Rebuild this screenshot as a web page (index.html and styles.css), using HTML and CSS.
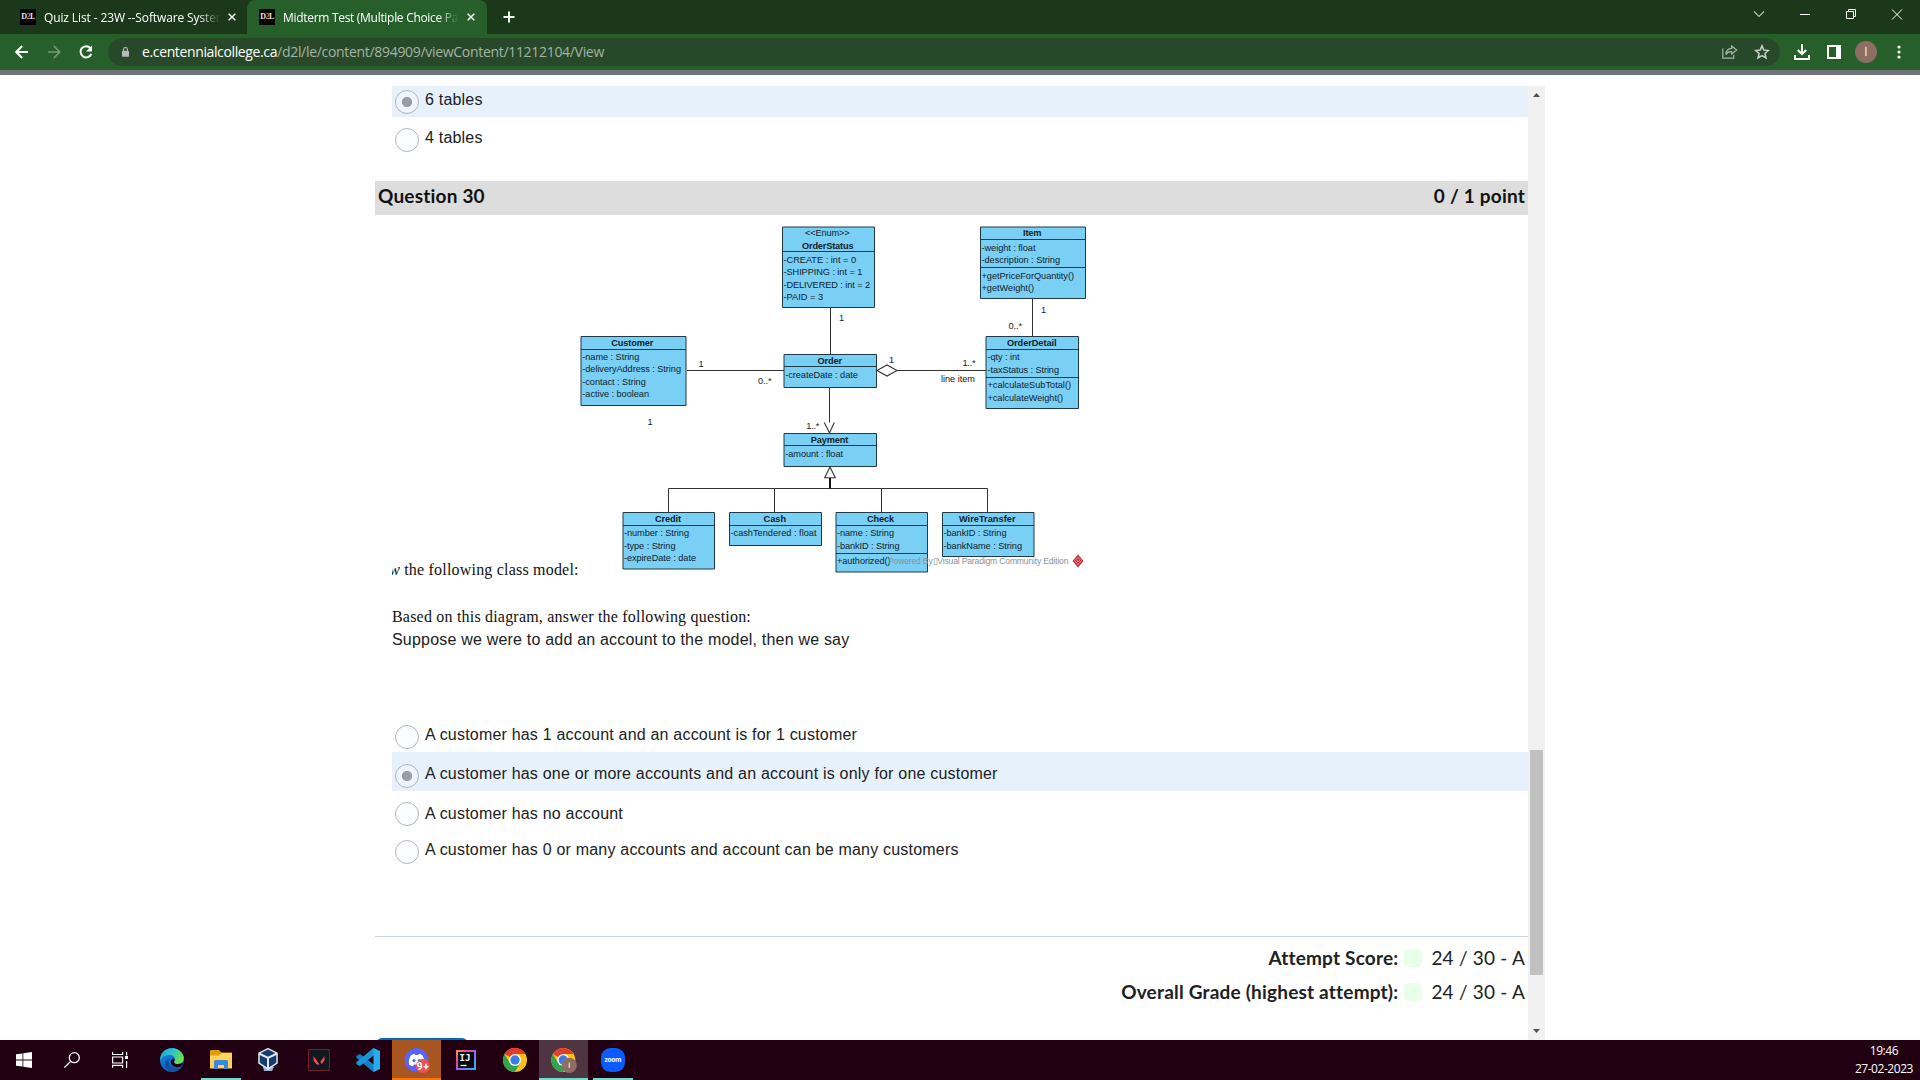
FILE: index.html
```html
<!DOCTYPE html>
<html lang="en">
<head>
<meta charset="utf-8">
<title>Midterm Test (Multiple Choice Part)</title>
<link rel="stylesheet" href="styles.css">
</head>
<body>
<header class="tabstrip">
  <div class="tab">
    <span class="favicon">D<i>2</i>L</span>
    <span class="tab-title">Quiz List - 23W --Software Systems</span>
    <svg class="tab-close" viewBox="0 0 8 8"><path d="M.7.7l6.6 6.6M7.3.7L.7 7.3"/></svg>
  </div>
  <div class="tab active">
    <span class="favicon">D<i>2</i>L</span>
    <span class="tab-title">Midterm Test (Multiple Choice Part</span>
    <svg class="tab-close" viewBox="0 0 8 8"><path d="M.7.7l6.6 6.6M7.3.7L.7 7.3"/></svg>
  </div>
  <svg class="new-tab" viewBox="0 0 12 12"><path d="M6 .5v11M.5 6h11"/></svg>
  <div class="window-controls">
    <svg viewBox="0 0 46 34"><path class="dim" d="M18 11.5l5 5 5-5"/></svg>
    <svg viewBox="0 0 46 34"><path d="M18 14.5h10"/></svg>
    <svg viewBox="0 0 46 34"><path d="M18.5 11.5h7v7h-7zM20.500 11.500v-2h7v7h-2"/></svg>
    <svg viewBox="0 0 46 34"><path d="M18 9.500l10 10M28 9.500l-10 10"/></svg>
  </div>
</header>
<nav class="toolbar">
  <svg class="nav-icon" viewBox="0 0 16 16"><path d="M14 8H3M8.200 2L2.200 8l6 6"/></svg>
  <svg class="nav-icon faded" viewBox="0 0 16 16"><path d="M2 8h11M7.800 2l6 6-6 6"/></svg>
  <svg class="nav-icon" viewBox="0 0 16 16"><path d="M13.300 10a5.600 5.600 0 1 1-1-6"/><path class="solid" d="M14 1.500v6H8z"/></svg>
  <div class="omnibox">
    <svg class="lock" viewBox="0 0 8 12"><rect x="0" y="4.500" width="8" height="7" rx=".8"/><path d="M1.800 5V3a2.200 2.200 0 0 1 4.400 0v2"/></svg>
    <span class="url"><b>e.centennialcollege.ca</b>/d2l/le/content/894909/viewContent/11212104/View</span>
    <svg class="share" viewBox="0 0 16 16"><path d="M.8 4.500v9.700h11v-3.400M9.700 2l5 4-5 4V7.700C6.800 7.500 5 8.500 3.800 10.600 4 6.800 6.200 4.700 9.700 4.400z"/></svg>
    <svg class="star" viewBox="0 0 16 16"><path d="M8 1.800l1.800 4.300 4.600.4-3.500 3 1.100 4.500L8 11.600 4 14l1.100-4.500-3.500-3 4.600-.4z"/></svg>
  </div>
  <svg class="download" viewBox="0 0 16 16"><path d="M8 0v10M3.800 6L8 10.200 12.200 6M1 11v4h14v-4"/></svg>
  <svg class="panel" viewBox="0 0 14 14"><path d="M0 0h14v14H0zM2 2v10h7V2z" fill-rule="evenodd"/></svg>
  <span class="avatar">I</span>
  <svg class="more" viewBox="0 0 4 14"><circle cx="2" cy="2" r="1.600"/><circle cx="2" cy="7" r="1.600"/><circle cx="2" cy="12" r="1.600"/></svg>
</nav>
<main class="page">
  <section class="quiz">
    <div class="option selected first"><span class="radio"></span><span class="label">6 tables</span></div>
    <div class="option second"><span class="radio"></span><span class="label">4 tables</span></div>
    <h2 class="question-bar"><span>Question 30</span><span>0 / 1 point</span></h2>
    <div class="figure">
      <p class="serif"><span class="clip"><i>w</i></span> the following class model:</p>
      <svg class="diagram" viewBox="578 222 530 352" width="530" height="352">
        <g class="box">
          <path d="M782.500 227h92v80.500h-92zM782.500 251.500h92"/>
          <path d="M581 336.500h105v69h-105zM581 349.500h105"/>
          <path d="M784 354.500h92.500v33h-92.500zM784 366.500h92.500"/>
          <path d="M980.500 227h105v71.500h-105zM980.500 239.500h105M980.500 267.500h105"/>
          <path d="M986 336.500h92.500v72h-92.500zM986 349.500h92.500M986 377.500h92.500"/>
          <path d="M784 433.500h92.500v33h-92.500zM784 445.500h92.500"/>
          <path d="M623 512.500h91.500v56.500h-91.500zM623 525.500h91.500"/>
          <path d="M729.500 512.500h92v33h-92zM729.500 525.500h92"/>
          <path d="M836 512.500h91.500v59.500h-91.500zM836 525.500h91.500M836 553.500h91.500"/>
          <path d="M942.500 512.500h91.500v44h-91.500zM942.500 525.500h91.500"/>
        </g>
        <g class="line">
          <path d="M830.500 308v46M687 370.500h97M897 370.500h89M1032.500 299v37M829.500 388v45M668.500 512v-23.500h319V512M774.500 489v23M881.500 489v23"/>
          <path class="slant" d="M824.300 422.500l5.200 10.500 4.800-10.500M877 370.500l10-5.500 10 5.500-10 5.500zM830 467l5.300 10.800h-10.600z"/>
          <path class="thick" d="M830 478v10.500"/>
        </g>
        <g class="title">
          <text x="802" y="248.500" textLength="51.500">OrderStatus</text>
          <text x="611.300" y="346" textLength="42">Customer</text>
          <text x="817.500" y="363.500" textLength="24.500">Order</text>
          <text x="1023" y="236.300" textLength="18.500">Item</text>
          <text x="1007" y="346" textLength="49.500">OrderDetail</text>
          <text x="810.700" y="442.500" textLength="37.500">Payment</text>
          <text x="655" y="522" textLength="26">Credit</text>
          <text x="763.500" y="522" textLength="22.500">Cash</text>
          <text x="867" y="522" textLength="27">Check</text>
          <text x="959" y="522" textLength="56.500">WireTransfer</text>
        </g>
        <g class="member">
          <text x="805" y="236.300" textLength="44.500">&lt;&lt;Enum&gt;&gt;</text>
          <text x="783.500" y="262.700" textLength="72.500">-CREATE : int = 0</text>
          <text x="783.500" y="275.200" textLength="78.800">-SHIPPING : int = 1</text>
          <text x="783.500" y="287.700" textLength="86.500">-DELIVERED : int = 2</text>
          <text x="783.500" y="300" textLength="39.500">-PAID = 3</text>
          <text x="582.300" y="360" textLength="57">-name : String</text>
          <text x="582.300" y="372.400" textLength="98.700">-deliveryAddress : String</text>
          <text x="582.300" y="384.800" textLength="63.500">-contact : String</text>
          <text x="582.300" y="397.200" textLength="66.700">-active : boolean</text>
          <text x="785.300" y="377.700" textLength="72.500">-createDate : date</text>
          <text x="785.300" y="456.700" textLength="57.700">-amount : float</text>
          <text x="981.500" y="250.700" textLength="54">-weight : float</text>
          <text x="981.500" y="263" textLength="78.500">-description : String</text>
          <text x="981.500" y="278.700" textLength="92.500">+getPriceForQuantity()</text>
          <text x="981.500" y="291" textLength="52.500">+getWeight()</text>
          <text x="987.500" y="360" textLength="32">-qty : int</text>
          <text x="987.500" y="372.600" textLength="71.500">-taxStatus : String</text>
          <text x="987.500" y="388.200" textLength="83.500">+calculateSubTotal()</text>
          <text x="987.500" y="400.800" textLength="75.500">+calculateWeight()</text>
          <text x="624" y="536.200" textLength="65">-number : String</text>
          <text x="624" y="548.600" textLength="51.500">-type : String</text>
          <text x="624" y="561" textLength="72">-expireDate : date</text>
          <text x="730.500" y="536.200" textLength="86">-cashTendered : float</text>
          <text x="837" y="536.200" textLength="57">-name : String</text>
          <text x="837" y="548.600" textLength="62.500">-bankID : String</text>
          <text x="837" y="564.300" textLength="53.500">+authorized()</text>
          <text x="943.500" y="536.200" textLength="63">-bankID : String</text>
          <text x="943.500" y="548.600" textLength="78.500">-bankName : String</text>
          <text x="839" y="320.500">1</text>
          <text x="698.500" y="367.300">1</text>
          <text x="647.500" y="424.500">1</text>
          <text x="889" y="362.700">1</text>
          <text x="1041" y="313.300">1</text>
          <text x="758" y="384" textLength="13.500">0..*</text>
          <text x="1008.500" y="329" textLength="13.500">0..*</text>
          <text x="962.500" y="366" textLength="13">1..*</text>
          <text x="941" y="382" textLength="34">line item</text>
          <text x="806.300" y="428.700" textLength="13">1..*</text>
        </g>
        <text class="watermark" x="888" y="564.300" textLength="180.500">Powered By▯Visual Paradigm Community Edition</text>
        <path d="M1078 554.500l5.500 6.500-5.500 6.500-5.500-6.500z" fill="#c8323a"/>
        <path d="M1076 559.500l2-2 2.200 2.200-2.200 2.300zM1074.500 560.500l3.500 4 3.500-4" fill="none" stroke="#efb0b0" stroke-width=".8"/>
      </svg>
    </div>
    <p class="serif prompt">Based on this diagram, answer the following question:</p>
    <p class="suppose">Suppose we were to add an account to the model, then we say</p>
    <div class="answers">
      <div class="option"><span class="radio"></span><span class="label">A customer has 1 account and an account is for 1 customer</span></div>
      <div class="option selected"><span class="radio"></span><span class="label">A customer has one or more accounts and an account is only for one customer</span></div>
      <div class="option third"><span class="radio"></span><span class="label">A customer has no account</span></div>
      <div class="option fourth"><span class="radio"></span><span class="label">A customer has 0 or many accounts and account can be many customers</span></div>
    </div>
    <div class="scores">
      <p><b>Attempt Score:</b><span class="swatch"></span><span>24 / 30 - A</span></p>
      <p><b>Overall Grade (highest attempt):</b><span class="swatch"></span><span>24 / 30 - A</span></p>
    </div>
    <div class="button-peek"></div>
  </section>
  <div class="scrollbar">
    <svg viewBox="0 0 7 4"><path d="M0 4h7L3.500 0z"/></svg>
    <div class="thumb"></div>
    <svg viewBox="0 0 7 4"><path d="M0 0h7L3.500 4z"/></svg>
  </div>
</main>
<footer class="taskbar">
  <div class="sys"><svg width="16" height="16" viewBox="0 0 16 16"><path fill="#fff" d="M0 2.300L6.500 1.400v6.200H0zM7.300 1.300L16 0v7.600H7.300zM0 8.400h6.500v6.200L0 13.700zM7.300 8.400H16V16l-8.700-1.200z"/></svg></div>
  <div class="sys"><svg width="16" height="16" viewBox="0 0 16 16" fill="none" stroke="#fff" stroke-width="1.300"><circle cx="10.300" cy="5.700" r="5"/><path d="M6.600 9.400L.4 15.600"/></svg></div>
  <div class="sys"><svg width="16" height="16" viewBox="0 0 16 16" fill="none" stroke="#fff" stroke-width="1.200"><path d="M.6 0v2.500h10V0M.6 5h10v6H.6zM.6 15.800v-2.500h10v2.500M14.600 0v3.500M14.600 9v7"/><path d="M13 4h3v3h-3z" fill="#fff" stroke="none"/></svg></div>
  <div class="app apps-start"><svg width="24" height="24" viewBox="0 0 24 24"><defs><linearGradient id="ea" x1="0" y1="0" x2="1" y2=".4"><stop offset="0" stop-color="#1fa5df"/><stop offset=".55" stop-color="#2fc3c8"/><stop offset="1" stop-color="#6be04a"/></linearGradient><linearGradient id="eb" x1="0" y1="0" x2=".5" y2="1"><stop offset="0" stop-color="#1a8fdc"/><stop offset="1" stop-color="#0b5cc0"/></linearGradient></defs><circle cx="12" cy="12" r="12" fill="url(#eb)"/><path d="M.5 9C2-1 19-4 23.500 8c1.200 4.500-1.500 8-6 8-3 0-4-1.200-3-3 1-2.500 0-6-5-6C5 7 1.500 9 .2 13z" fill="url(#ea)"/><path d="M9.500 10.500c-2 4 0 9 5 10 3 .5 6-.5 8-2.500C17 26 6 25 5 17c-.3-3 1.500-6 4.500-6.500z" fill="#124f9f"/><path d="M14.300 10.500c1 2-.7 2.800-.2 4 .6 2 5.500 2.400 9 0-.2 1.500-.8 2.800-1.500 3.800-4 1.500-8 1.200-10.200-2-1.500-2.500-.6-5.200 2.900-5.800z" fill="#210011"/></svg></div>
  <div class="app running"><svg width="22" height="20" viewBox="0 0 22 20"><path d="M0 1q0-1 1-1h8l2.500 2.500H22V9H0z" fill="#e09b0a"/><path d="M0 5.500h9L11.500 3H21q1 0 1 1v14.500H0z" fill="#ffd35c"/><path d="M4 19v-7.500q0-1.500 1.500-1.500h11q1.500 0 1.500 1.500V19h-4v-4H8v4z" fill="#3b87dc"/></svg></div>
  <div class="app vbox"><svg width="20" height="24" viewBox="0 0 20 24"><path d="M5 19l5-2 6 2-2 4H6z" fill="#9bacd0"/><path d="M10 .7l9 4.500v10L10 21 1 15.200v-10z" fill="#173a6d" stroke="#e2e8f2" stroke-width="1.500"/><path d="M1 5.500l9 4.500 9-4.500M10 10v11" fill="none" stroke="#e2e8f2" stroke-width="2"/></svg></div>
  <div class="app"><svg width="22" height="22" viewBox="0 0 22 22"><path d="M.5.500h21v21H.500z" fill="#111820" stroke="#7b1c2d"/><path d="M5.500 7l6 8.500H8.700l-3.200-4zM16.500 7v4.300L13.800 15l-1.500-2z" fill="#ff4655"/></svg></div>
  <div class="app"><svg width="24" height="24" viewBox="0 0 24 24"><path d="M17.500 0L4.500 12l13 12 1.500-5.500L10.500 12 19 5.500z" fill="#0a78bf"/><path d="M2 7L.3 8.300v1.500L17.500 24 19 17.500 4 6z" fill="#1182c8" /><path d="M2 17.200L.3 15.800v-1.500L17.500 0 19 6.500 4 18z" fill="#1b93d8"/><path d="M17.500 0L24 3v18l-6.500 3z" fill="#2aabee"/></svg></div>
  <div class="app alert"><svg width="26" height="26" viewBox="0 0 26 26"><circle cx="12.500" cy="13" r="12" fill="#5865f2"/><path d="M5 17.500C4.500 13 6 9 7.500 8q2-1.300 3-1l.6 1h3l.6-1q2 0 3.300 1c1.500 1.500 3 6 2.500 9.500-1.500 1.500-3 1.700-4 1.700l-1-1.700h-5.500l-1 1.700c-1.500 0-2.500-.5-4-1.700z" fill="#fff"/><circle cx="10" cy="13.600" r="1.600" fill="#5865f2"/><circle cx="15.400" cy="13.600" r="1.600" fill="#5865f2"/><circle cx="19" cy="19" r="7" fill="#ed5055"/><text x="12.800" y="23" textLength="12" class="badge-text">9+</text></svg></div>
  <div class="app"><svg width="20" height="20" viewBox="0 0 20 20"><defs><linearGradient id="ij" x1="0" y1="0" x2="1" y2="1"><stop offset="0" stop-color="#fc9a3d"/><stop offset=".3" stop-color="#e4459b"/><stop offset=".55" stop-color="#8a6cf0"/><stop offset="1" stop-color="#2fb5f5"/></linearGradient></defs><path d="M0 0h20v20H0z" fill="url(#ij)"/><path d="M2 2h16v16H2z" fill="#080810"/><path d="M4.500 15.500h6" stroke="#fff" stroke-width="1.300"/><text class="ij-text" x="3.500" y="10.500">IJ</text></svg></div>
  <div class="app"><svg width="24" height="24" viewBox="0 0 24 24"><circle cx="12" cy="12" r="12" fill="#fbc116"/><path d="M12 12L1.600 6A12 12 0 0 1 22.400 6H12z" fill="#e33b2e"/><path d="M12 12L6.800 15 1.600 6a12 12 0 0 0 10.200 18l5.400-9z" fill="#2da44e"/><circle cx="12" cy="12" r="6" fill="#fff"/><circle cx="12" cy="12" r="4.700" fill="#3a7de8"/></svg></div>
  <div class="app current"><svg width="26" height="26" viewBox="0 0 26 26"><g transform="translate(.3 1)"><circle cx="12" cy="12" r="12" fill="#fbc116"/><path d="M12 12L1.600 6A12 12 0 0 1 22.400 6H12z" fill="#e33b2e"/><path d="M12 12L6.800 15 1.600 6a12 12 0 0 0 10.200 18l5.400-9z" fill="#2da44e"/><circle cx="12" cy="12" r="6" fill="#fff"/><circle cx="12" cy="12" r="4.700" fill="#3a7de8"/></g><circle cx="18.300" cy="18.300" r="7.600" fill="#8d6e63"/><path d="M18.300 15.500v5.500" stroke="#e0d5d0" stroke-width="1.300"/></svg></div>
  <div class="app running"><svg width="24" height="24" viewBox="0 0 24 24"><rect width="24" height="24" rx="9.500" fill="#0b5cff"/><text class="zoom-text" x="3.500" y="14" textLength="17">zoom</text></svg></div>
  <div class="clock"><span>19:46</span><span>27-02-2023</span></div>
</footer>
</body>
</html>
```
FILE: styles.css
```css
* { box-sizing: border-box; }
body {
  margin: 0;
  width: 1920px;
  height: 1080px;
  overflow: hidden;
  display: flex;
  flex-direction: column;
  background: #fff;
  font-family: "Liberation Sans", Arial, sans-serif;
  color: #202122;
}
p, h2 { margin: 0; }
svg { display: block; flex: none; }

/* Tab strip */
.tabstrip {
  height: 34px;
  flex: none;
  display: flex;
  background: #1b381b;
}
.tab {
  width: 240px;
  display: flex;
  align-items: center;
  padding: 0 0 0 12px;
  color: #fff;
}
.tab:first-child { width: 247px; padding-left: 20px; }
.tab.active {
  background: #275f2b;
  border-radius: 8px 8px 0 0;
}
.favicon {
  width: 16px;
  height: 16px;
  flex: none;
  background: #000;
  color: #e8e8e8;
  font: 700 8px/16px "Liberation Serif", serif;
  letter-spacing: -.5px;
  text-align: center;
}
.favicon i { font-style: normal; color: #e08a5a; }
.tab-title {
  width: 176px;
  margin-left: 8px;
  overflow: hidden;
  white-space: nowrap;
  font: 12px/17px "Open Sans", sans-serif;
  letter-spacing: -.12px;
  -webkit-mask-image: linear-gradient(90deg, #000 88%, transparent 100%);
  mask-image: linear-gradient(90deg, #000 88%, transparent 100%);
}
.active .tab-title { letter-spacing: -.3px; }
.tab-close { width: 8px; height: 8px; margin-left: 8px; fill: none; stroke: #fff; stroke-width: 1.5; }
.new-tab { width: 12px; height: 12px; margin: 11px 0 0 16px; fill: none; stroke: #fff; stroke-width: 2; }
.window-controls { margin-left: auto; display: flex; }
.window-controls svg { width: 46px; height: 34px; fill: none; stroke: #fff; stroke-width: 1; }
.window-controls .dim { stroke: #b8c2b8; stroke-width: 1.2; }

/* Toolbar */
.toolbar {
  height: 41px;
  flex: none;
  display: flex;
  align-items: center;
  padding: 0 19px 1px 14px;
  background: #275f2b;
  border-bottom: 5px solid #6f7478;
}
.nav-icon { width: 16px; height: 16px; margin-right: 16px; fill: none; stroke: #fff; stroke-width: 2; }
.nav-icon.faded { stroke: #76997a; stroke-width: 1.6; }
.nav-icon .solid { fill: #fff; stroke: none; }
.nav-icon:nth-child(3) { margin-right: 14px; }
.omnibox {
  width: 1672px;
  height: 28px;
  display: flex;
  align-items: center;
  padding: 0 10px 0 14px;
  border-radius: 14px;
  background: #274929;
}
.lock { width: 7px; height: 12px; fill: #b5bcb8; }
.lock path { fill: none; stroke: #b5bcb8; stroke-width: 1.3; }
.url { margin: 0 auto 0 13px; font: 14px/20px "Open Sans", sans-serif; letter-spacing: -.31px; color: #a5b3a5; white-space: nowrap; }
.url b { font-weight: 400; color: #fff; letter-spacing: -.37px; }
.share { width: 16px; height: 16px; margin-right: 16px; fill: none; stroke: #a9b5aa; stroke-width: 1.2; }
.star { width: 16px; height: 16px; fill: none; stroke: #c9d0c9; stroke-width: 1.5; }
.download { width: 16px; height: 16px; margin-left: 14px; fill: none; stroke: #fff; stroke-width: 2; }
.panel { width: 14px; height: 14px; margin-left: 17px; fill: #fff; }
.avatar {
  width: 22px;
  height: 22px;
  margin-left: 14px;
  border-radius: 50%;
  background: #8d6e63;
  color: #efe9e6;
  font: 12px/22px Roboto, sans-serif;
  text-align: center;
}
.more { width: 4px; height: 14px; margin-left: auto; fill: #fff; }

/* Quiz page */
.page {
  flex: 1;
  min-height: 0;
  display: flex;
  padding: 11px 0 0 375px;
}
.quiz { width: 1153px; display: flex; flex-direction: column; overflow: hidden; font-size: 16px; letter-spacing: .2px; }
.option {
  height: 39px;
  flex: none;
  margin-left: 17px;
  padding: 12px 0 0 3px;
  display: flex;
  align-items: flex-start;
}
.option.selected { background: #e7f1fc; }
.option.first { height: 31px; padding-top: 4px; }
.option.second { height: 64px; padding-top: 11px; }
.option.third { height: 38px; padding-top: 11px; }
.option.fourth { padding-top: 11px; }
.radio {
  width: 24px;
  height: 24px;
  border: 1px solid #b2b5b8;
  border-radius: 50%;
  background: #fbfcff;
}
.selected .radio { background: radial-gradient(circle, #989da6 4.700px, #eff5fe 5.500px); }
.label { margin: -2px 0 0 6px; line-height: 24px; }
.third .label { margin-top: 0; }
.question-bar {
  height: 34px;
  flex: none;
  display: flex;
  justify-content: space-between;
  padding: 0 3px;
  background: #ddd;
  color: #111;
  font: 700 19px/30px Lato, sans-serif;
  letter-spacing: .2px;
}
.figure { height: 364px; flex: none; display: flex; align-items: flex-end; padding: 0 0 5px 17px; }
.serif { width: 186px; font: 16px/18px "Liberation Serif", serif; letter-spacing: .2px; white-space: nowrap; color: #111; }
.figure .serif { flex: none; margin-bottom: -5px; }
.clip { display: inline-flex; justify-content: flex-end; width: 8px; overflow: hidden; vertical-align: bottom; }
.diagram { align-self: flex-start; margin-top: 7px; }
.prompt { margin: 29px 0 0 17px; }
.suppose { margin: 1px 0 0 17px; line-height: 26px; }
.answers { margin-top: 60px; }
.scores {
  margin-top: 68px;
  padding: 4px 3px 0;
  border-top: 1px solid #cdd5dc;
  font: 19px/34px Lato, sans-serif;
  letter-spacing: .2px;
}
.scores p { display: flex; justify-content: flex-end; align-items: center; height: 34px; }
.swatch { width: 18px; height: 18px; margin: 0 9px 0 6px; border-radius: 5px; background: #e8ffe8; }
.button-peek { width: 92px; height: 34px; flex: none; margin: 29px 0 0 1px; border-radius: 6px; background: #006fbf; }

.box path { fill: #7acff5; stroke: #1f3a47; }
.line path { fill: none; stroke: #333; }
.line .slant { fill: #fff; stroke-width: 1.1; }
.line .thick { stroke-width: 2; stroke: #111; }
.diagram text { font: 9.200px "Liberation Sans", Arial, sans-serif; letter-spacing: 0; fill: #10222c; }
.diagram .title text { font-weight: 700; }
.diagram .watermark { font-size: 8.600px; fill: #8b9299; }

.scrollbar {
  width: 17px;
  display: flex;
  flex-direction: column;
  align-items: center;
  padding: 7px 0;
  background: #f1f1f1;
}
.scrollbar svg { width: 7px; height: 4px; fill: #505050; }
.thumb { width: 13px; height: 225px; margin: 653px 0 auto; background: #c1c1c1; }

/* Taskbar */
.taskbar { height: 40px; flex: none; display: flex; background: #210011; }
.sys { width: 48px; display: grid; place-items: center; }
.app { width: 49px; display: grid; place-items: center; }
.apps-start { margin-left: 3px; }
.vbox svg { margin-right: 3px; }
.running { background: linear-gradient(#6fdccb, #6fdccb) center bottom / 40px 2px no-repeat; }
.current { background: #4f3442; border-bottom: 2px solid #6fdccb; padding-top: 2px; }
.alert { background: #a9551f; border-bottom: 2px solid #ff7300; padding-top: 2px; }
.badge-text { font: 700 10px Roboto, sans-serif; fill: #fff; }
.ij-text { font: 700 9px "DejaVu Sans Mono", monospace; fill: #fff; }
.zoom-text { font: 700 6.500px "Open Sans", sans-serif; fill: #fff; }
.clock {
  margin-left: auto;
  padding: 2px 7px 0 0;
  display: flex;
  flex-direction: column;
  align-items: center;
  color: #fff;
  font: 12px/18px "Open Sans", sans-serif;
  letter-spacing: -.45px;
}
```
